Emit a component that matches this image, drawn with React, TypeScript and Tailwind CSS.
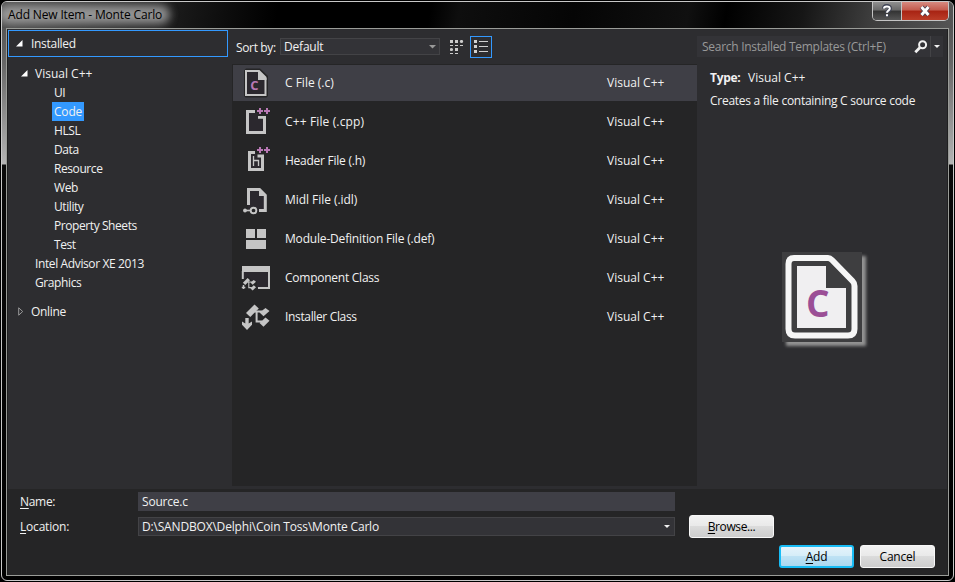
import type { ReactNode } from "react";

type Template = {
  name: string;
  icon: ReactNode;
  tracking: string;
  selected?: boolean;
};

const GLYPH = "#c5c5c5";
const PURPLE = "#b878b4";

function Plus({ x, y }: { x: number; y: number }) {
  return <path d={`M${x - 3} ${y}h6M${x} ${y - 3}v6`} stroke={PURPLE} strokeWidth="2" fill="none" />;
}

function RowIcon({ children }: { children: ReactNode }) {
  return (
    <svg width="32" height="36" viewBox="0 0 32 36" className="shrink-0">
      {children}
    </svg>
  );
}

function CFileIcon() {
  return (
    <RowIcon>
      <path d="M6 3.5H20L28 11V31L26.5 32.5H5.5L4 31V5.5Z" fill="#252526" />
      <path d="M6 6H19L25.5 12.5V30H6Z" fill="#2b282e" stroke={GLYPH} strokeWidth="2" />
      <path d="M18 5L26.5 13.5V15H18Z" fill={GLYPH} />
      <text x="10.3" y="25.2" fontSize="13" fontWeight="700" fontFamily="Open Sans, sans-serif" fill={PURPLE}>C</text>
    </RowIcon>
  );
}

function CppFileIcon() {
  return (
    <RowIcon>
      <path d="M8 8H24.5V28.5H8Z" fill="#2b282e" />
      <path d="M15 7.5H7.5V28.5H24.5V13.2H18" fill="none" stroke={GLYPH} strokeWidth="3" />
      <path d="M15.5 5H32V11H26.5V12H17.5V9H15.5Z" fill="#252526" />
      <Plus x={20} y={7} />
      <Plus x={27} y={7} />
    </RowIcon>
  );
}

function HeaderIcon() {
  return (
    <RowIcon>
      <path d="M9 9H23V27H9Z" fill="#2b282e" />
      <path d="M15 9.5H9.5V26.5H22.5V13H17.5" fill="none" stroke={GLYPH} strokeWidth="3" />
      <path d="M16 5H32V11H16Z" fill="#252526" />
      <path d="M13.5 13V23M13.5 17.5H18.5V23" fill="none" stroke={GLYPH} strokeWidth="1.3" />
      <Plus x={20} y={7} />
      <Plus x={27} y={7} />
    </RowIcon>
  );
}

function MidlIcon() {
  return (
    <RowIcon>
      <path d="M8 7H20L26 13V29H8Z" fill="#2b282e" />
      <path d="M8.5 23V7.5H19.5L25.3 13.3V28.5H19" fill="none" stroke={GLYPH} strokeWidth="3" />
      <path d="M19 6V14H26Z" fill={GLYPH} />
      <path d="M5 28.5H10" stroke={GLYPH} strokeWidth="1.6" />
      <circle cx="5" cy="28.5" r="1.9" fill={GLYPH} />
      <circle cx="13.5" cy="28.5" r="2.8" fill="#252526" stroke={GLYPH} strokeWidth="1.9" />
    </RowIcon>
  );
}

function ModuleIcon() {
  return (
    <RowIcon>
      <path d="M6 8H15V17H6ZM17 8H26V17H17ZM6 19H26V28H6Z" fill={GLYPH} />
    </RowIcon>
  );
}

function ClassGlyph() {
  return (
    <g fill={GLYPH}>
      <path d="M6 14L14.5 5.5L18.8 9.5L10.3 18Z" />
      <path d="M19.5 13.5L25.5 9L29.5 12L23.5 17.3Z" />
      <path d="M19.5 24L25.5 18.5L29.5 21.8L23.5 27.8Z" />
      <path d="M14.5 12.5H22M16.6 13V22.5H22" fill="none" stroke={GLYPH} strokeWidth="2" />
    </g>
  );
}

function ComponentIcon() {
  return (
    <RowIcon>
      <path d="M3 8H29V28H3Z" fill="#2b282e" />
      <path d="M2 6H30V12H2Z" fill={GLYPH} />
      <path d="M2.8 11V19M29 11V28H18" fill="none" stroke={GLYPH} strokeWidth="2" />
      <path d="M2 19H5L8 16L12 21H17V31H2Z" fill="#252526" />
      <g transform="translate(-0.5 15) scale(.56)">
        <ClassGlyph />
      </g>
      <path d="M3.5 25V29M1.8 27.5H5.3" stroke={GLYPH} strokeWidth="1.5" />
    </RowIcon>
  );
}

function InstallerIcon() {
  return (
    <RowIcon>
      <ClassGlyph />
      <path d="M5.3 19H8.7V24.5L12 22.5V25.8L7 31L2 25.8V22.5L5.3 24.5Z" fill={GLYPH} />
    </RowIcon>
  );
}

const templates: Template[] = [
  { name: "C File (.c)", icon: <CFileIcon />, tracking: "tracking-normal", selected: true },
  { name: "C++ File (.cpp)", icon: <CppFileIcon />, tracking: "tracking-[0.13px]" },
  { name: "Header File (.h)", icon: <HeaderIcon />, tracking: "tracking-[-0.25px]" },
  { name: "Midl File (.idl)", icon: <MidlIcon />, tracking: "tracking-[-0.05px]" },
  { name: "Module-Definition File (.def)", icon: <ModuleIcon />, tracking: "tracking-[-0.18px]" },
  { name: "Component Class", icon: <ComponentIcon />, tracking: "tracking-[-0.25px]" },
  { name: "Installer Class", icon: <InstallerIcon />, tracking: "tracking-[-0.35px]" },
];

const codeFolders = ["UI", "Code", "HLSL", "Data", "Resource", "Web", "Utility", "Property Sheets", "Test"];

function ExpandedArrow() {
  return (
    <svg width="7" height="7" viewBox="0 0 7 7">
      <path d="M6.5 0V6.5H0Z" fill="#fff" />
    </svg>
  );
}

function TitleBar() {
  return (
    <div className="relative flex h-[26px] shrink-0 justify-between overflow-hidden rounded-t-[5px] bg-[linear-gradient(100deg,#4a4a4a_0%,#161616_20%,#0c0c0c_24%,#000_29%,#000_45%,#0e0e0e_48%,#050505_60%,#101010_72%,#000_76%,#161616_84%,#3c3c3c_91%,#555_100%)]">
      <div className="absolute -left-1 top-[3px] h-[19px] w-[172px] rounded-full bg-[#a8a8a8] opacity-85 blur-[5px]" />
      <div className="relative pl-[6px] pt-[5px] leading-4 tracking-[-0.15px] text-black">Add New Item - Monte Carlo</div>
      <div className="relative mr-[4px] flex h-[19px] rounded-b-[5px] border border-t-0 border-[#c4c4c4]">
        <div className="flex w-[28px] items-center justify-center rounded-bl bg-[linear-gradient(#8f8f8f_0%,#696969_45%,#333_50%,#555_100%)]">
          <svg width="12" height="14" viewBox="0 0 12 14">
            <path d="M3 4.6C3 1.2 9 1.2 9 4.4C9 6.6 6 6.6 6 9M6 10.3V12.5" fill="none" stroke="#414556" strokeWidth="4" />
            <path d="M3 4.6C3 1.7 8.8 1.7 8.8 4.4C8.8 6.4 6 6.6 6 8.8M6 10.3V12.3" fill="none" stroke="#fff" strokeWidth="2" />
          </svg>
        </div>
        <div className="flex w-[47px] items-center justify-center rounded-br border-l border-[#c4c4c4] bg-[linear-gradient(#d78a80_0%,#c35a4c_45%,#a82313_50%,#bb3d28_100%)]">
          <svg width="14" height="12" viewBox="0 0 14 12">
            <path d="M3.5 2L10.5 10M10.5 2L3.5 10" stroke="#4d4454" strokeWidth="4.8" />
            <path d="M3.5 2L10.5 10M10.5 2L3.5 10" stroke="#fff" strokeWidth="2.8" />
          </svg>
        </div>
      </div>
    </div>
  );
}

function CategoryTree() {
  return (
    <div className="w-[220px] shrink-0 pt-px tracking-[-0.3px]">
      <div className="flex h-[27px] items-center border border-[#3399ff] pl-[7px]">
        <ExpandedArrow />
        <span className="ml-[8px]">Installed</span>
      </div>
      <div className="mt-[7px] flex h-[19px] items-center pl-[13px]">
        <ExpandedArrow />
        <span className="ml-[7px] tracking-normal">Visual C++</span>
      </div>
      {codeFolders.map((folder) => (
        <div key={folder} className="flex h-[19px] items-center pl-11">
          <span
            className={
              folder === "Code"
                ? "bg-[#3399ff] px-[2px] leading-[19px] tracking-[-0.2px]"
                : "px-[2px] leading-[19px] tracking-[-0.42px]"
            }
          >
            {folder}
          </span>
        </div>
      ))}
      <div className="pl-[27px] leading-[19px] tracking-[-0.38px]">Intel Advisor XE 2013</div>
      <div className="pl-[27px] leading-[19px] tracking-[-0.4px]">Graphics</div>
      <div className="mt-[10px] flex h-[19px] items-center pl-[10px]">
        <svg width="6" height="9" viewBox="0 0 6 9">
          <path d="M.7 .8V8.2L4.7 4.5Z" fill="none" stroke="#999" />
        </svg>
        <span className="ml-[7px]">Online</span>
      </div>
    </div>
  );
}

function Toolbar() {
  return (
    <div className="flex h-[35px] items-start pl-1">
      <span className="w-[44px] pt-[10px] leading-[18px] tracking-[-0.35px]">Sort by:</span>
      <div className="mt-[9px] flex h-[17px] w-[160px] items-center justify-between border border-[#434346] bg-[#333337] pl-[3px] pr-[3px]">
        <span>Default</span>
        <svg width="7" height="4" viewBox="0 0 7 4">
          <path d="M0 0H7L3.5 3.5Z" fill="#999" />
        </svg>
      </div>
      <svg width="14" height="15" viewBox="0 0 14 15" className="ml-[10px] mt-[11px]">
        <path d="M0 0h3v3H0zM5 0h3v3H5zM0 5h3v1H0zM5 5h3v1H5zM10 5h3v1h-3zM5 8h3v3H5zM0 13h3v1H0zM5 13h3v1H5z" fill="#ccc" />
        <circle cx="11.5" cy="1.5" r="1.6" fill="#ccc" />
        <circle cx="1.5" cy="9.5" r="1.6" fill="#ccc" />
      </svg>
      <div className="ml-[6px] mt-[7px] flex h-[22px] w-[22px] items-center justify-center border border-[#3399ff]">
        <svg width="14" height="14" viewBox="0 0 14 14">
          <path d="M0 0h3v3H0zM0 5h3v3H0zM0 10h3v3H0zM5 1h9v1H5zM5 6h9v1H5zM5 11h9v1H5z" fill="#d0d0d0" />
        </svg>
      </div>
    </div>
  );
}

function TemplateList() {
  return (
    <div className="ml-1 w-[465px] shrink-0">
      <Toolbar />
      <div className="flex h-[422px] flex-col gap-[3px] bg-[#252526] pl-px pt-[1px]">
        {templates.map((template) => (
          <div key={template.name} className={template.selected ? "flex h-9 items-center bg-[#3f3f46] pl-[7px]" : "flex h-9 items-center pl-[7px]"}>
            {template.icon}
            <span className={`ml-[13px] w-[322px] ${template.tracking}`}>{template.name}</span>
            <span className="tracking-normal">Visual C++</span>
          </div>
        ))}
      </div>
    </div>
  );
}

function Details() {
  return (
    <div className="flex flex-1 flex-col pt-[7px]">
      <div className="mr-[4px] flex h-[21px] items-center bg-[#333337] pl-[5px]">
        <span className="flex-1 whitespace-nowrap text-[#999] tracking-[-0.28px]">Search Installed Templates (Ctrl+E)</span>
        <svg width="14" height="14" viewBox="0 0 14 14" className="mr-[2px]">
          <circle cx="8.6" cy="4.8" r="3.5" fill="none" stroke="#f1f1f1" strokeWidth="2" />
          <path d="M6 7.5L1.3 12.2" stroke="#f1f1f1" strokeWidth="2.8" />
        </svg>
        <div className="flex h-full w-[13px] items-center justify-center border-l border-[#434346]">
          <svg width="6" height="3" viewBox="0 0 6 3">
            <path d="M0 0H6L3 3Z" fill="#f1f1f1" />
          </svg>
        </div>
      </div>
      <div className="mt-[12px] flex pl-[13px] leading-[18px]">
        <span className="w-[38px] font-bold tracking-[-0.3px]">Type:</span>
        <span className="tracking-normal">Visual C++</span>
      </div>
      <div className="mt-[5px] whitespace-nowrap pl-[13px] leading-[18px] tracking-[-0.27px]">Creates a file containing C source code</div>
      <div className="ml-[85px] mt-[142px] h-[90px] w-[80px] bg-[#3e3e40] shadow-[4px_4px_3px_#929292]">
        <svg width="80" height="90" viewBox="0 0 80 90">
          <path d="M12 6H46Q48 6 50 8L70.5 29Q72.5 31 72.5 34V77Q72.5 83.5 66 83.5H13Q6.5 83.5 6.5 77V12Q6.5 6 12 6Z" fill="#3e3e40" stroke="#f6f6f6" strokeWidth="6" />
          <path d="M15 14H44V36H64V76H15Z" fill="#f0eff1" />
          <text x="24" y="65.3" fontSize="37" fontWeight="700" fontFamily="Open Sans, sans-serif" fill="#9b4f96">C</text>
        </svg>
      </div>
    </div>
  );
}

function DialogFooter() {
  return (
    <div className="h-[86px] bg-[#252526] pt-[3px]">
      <div className="flex h-[19px] items-center pl-3">
        <span className="w-[118px] tracking-[-0.3px]"><u className="underline-offset-2">N</u>ame:</span>
        <div className="w-[537px] bg-[#3f3f46] pl-1 leading-[19px]">Source.c</div>
      </div>
      <div className="mt-[4px] flex h-[23px] items-center pl-3">
        <span className="w-[118px]"><u className="underline-offset-2">L</u>ocation:</span>
        <div className="flex h-[19px] w-[537px] items-center justify-between border border-[#434346] bg-[#333337] pl-[3px] pr-[4px]">
          <span className="tracking-[-0.18px]">D:\SANDBOX\Delphi\Coin Toss\Monte Carlo</span>
          <svg width="6" height="3" viewBox="0 0 6 3">
            <path d="M0 0H6L3 3Z" fill="#f1f1f1" />
          </svg>
        </div>
        <button className="ml-[14px] h-[23px] w-[85px] rounded-[3px] border border-[#f8f8f8] bg-[linear-gradient(#f2f2f2_0%,#e9e9e9_48%,#dbdbdb_50%,#cdcdcd_100%)] tracking-[-0.4px] text-black">
          <u className="underline-offset-2">B</u>rowse...
        </button>
      </div>
      <div className="mr-[12px] mt-[7px] flex justify-end gap-[6px] text-black">
        <button className="h-[23px] w-[75px] rounded-[3px] border-2 border-[#18bcf5] bg-[linear-gradient(#e5f3fb_0%,#d5edf8_48%,#bee2f4_50%,#acd8f0_100%)]">
          <u className="underline-offset-2">A</u>dd
        </button>
        <button className="h-[23px] w-[75px] rounded-[3px] border border-[#f8f8f8] bg-[linear-gradient(#f2f2f2_0%,#e9e9e9_48%,#dbdbdb_50%,#cdcdcd_100%)]">Cancel</button>
      </div>
    </div>
  );
}

export default function App() {
  return (
    <div className="h-[582px] w-[955px] overflow-hidden bg-black pl-px pt-px font-['Open_Sans','Noto_Sans',sans-serif] text-[12px] leading-4 tracking-[-0.2px] text-[#f1f1f1]">
      <div className="flex h-[580px] w-[953px] flex-col rounded-[6px] border border-[#c8c8c8] bg-[linear-gradient(#4a4a4a_0px,#666_60px,#b4b4b4_162px,#0a0a0a_163px,#000_100%)]">
        <TitleBar />
        <div className="mx-[4px] flex h-[548px] flex-col border border-[#9a9c98] bg-[#1f1f20] px-px">
          <div className="flex h-[460px] bg-[#2d2d30]">
            <CategoryTree />
            <TemplateList />
            <Details />
          </div>
          <DialogFooter />
        </div>
      </div>
    </div>
  );
}
